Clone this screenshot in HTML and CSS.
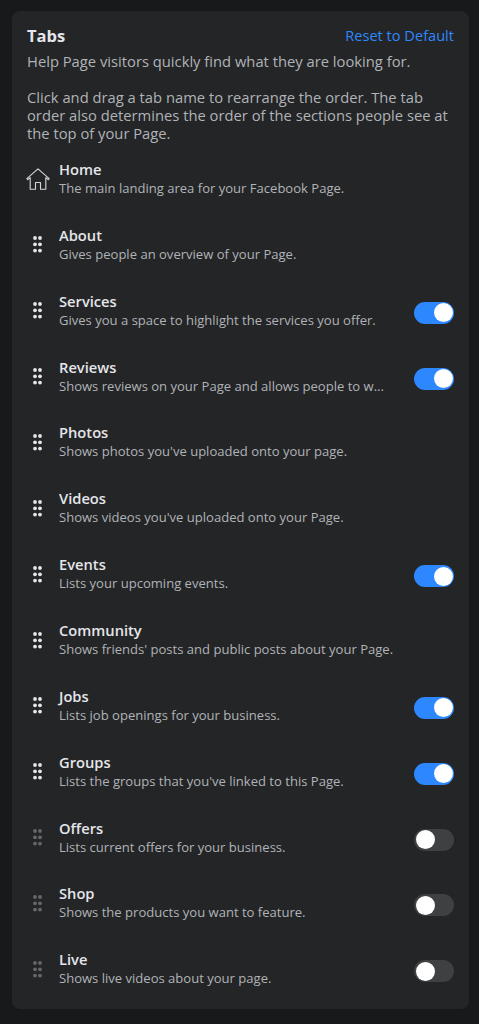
FILE: index.html
```html
<!DOCTYPE html>
<html lang="en">
<head>
<meta charset="UTF-8">
<meta name="viewport" content="width=device-width, initial-scale=1.0">
<title>Tabs</title>
<link rel="stylesheet" href="styles.css">
</head>
<body>
  <svg class="defs" width="0" height="0">
    <defs>
      <g id="grip">
        <circle cx="2" cy="2" r="1.900"/><circle cx="7" cy="2" r="1.900"/>
        <circle cx="2" cy="8.300" r="1.900"/><circle cx="7" cy="8.300" r="1.900"/>
        <circle cx="2" cy="14.600" r="1.900"/><circle cx="7" cy="14.600" r="1.900"/>
      </g>
    </defs>
  </svg>

  <div class="card">
    <div class="head">
      <h1>Tabs</h1>
      <a class="reset">Reset to Default</a>
    </div>
    <p class="intro">Help Page visitors quickly find what they are looking for.</p>
    <p class="intro second">Click and drag a tab name to rearrange the order. The tab order also determines the order of the sections people see at the top of your Page.</p>

    <div class="rows">
      <div class="row">
        <svg class="home" width="24" height="22" viewBox="0 0 24 22" fill="none" stroke="#d4d6da" stroke-width="1.100" stroke-linejoin="round"><path d="M.8 10.600 12 .8l11.200 9.800-1 1.100-2.400-2.100v11.600h-5.300v-6.700H9.500v6.700H4.200V9.600l-2.400 2.100z"/></svg>
        <div class="text"><div class="name">Home</div><div class="desc">The main landing area for your Facebook Page.</div></div>
      </div>
      <div class="row">
        <svg class="grip" width="9" height="17" viewBox="0 0 9 17"><use href="#grip"/></svg>
        <div class="text"><div class="name">About</div><div class="desc">Gives people an overview of your Page.</div></div>
      </div>
      <div class="row">
        <svg class="grip" width="9" height="17" viewBox="0 0 9 17"><use href="#grip"/></svg>
        <div class="text"><div class="name">Services</div><div class="desc">Gives you a space to highlight the services you offer.</div></div>
        <span class="toggle on"></span>
      </div>
      <div class="row">
        <svg class="grip" width="9" height="17" viewBox="0 0 9 17"><use href="#grip"/></svg>
        <div class="text"><div class="name">Reviews</div><div class="desc">Shows reviews on your Page and allows people to w...</div></div>
        <span class="toggle on"></span>
      </div>
      <div class="row">
        <svg class="grip" width="9" height="17" viewBox="0 0 9 17"><use href="#grip"/></svg>
        <div class="text"><div class="name">Photos</div><div class="desc">Shows photos you've uploaded onto your page.</div></div>
      </div>
      <div class="row">
        <svg class="grip" width="9" height="17" viewBox="0 0 9 17"><use href="#grip"/></svg>
        <div class="text"><div class="name">Videos</div><div class="desc">Shows videos you've uploaded onto your Page.</div></div>
      </div>
      <div class="row">
        <svg class="grip" width="9" height="17" viewBox="0 0 9 17"><use href="#grip"/></svg>
        <div class="text"><div class="name">Events</div><div class="desc">Lists your upcoming events.</div></div>
        <span class="toggle on"></span>
      </div>
      <div class="row">
        <svg class="grip" width="9" height="17" viewBox="0 0 9 17"><use href="#grip"/></svg>
        <div class="text"><div class="name">Community</div><div class="desc">Shows friends' posts and public posts about your Page.</div></div>
      </div>
      <div class="row">
        <svg class="grip" width="9" height="17" viewBox="0 0 9 17"><use href="#grip"/></svg>
        <div class="text"><div class="name">Jobs</div><div class="desc">Lists job openings for your business.</div></div>
        <span class="toggle on"></span>
      </div>
      <div class="row">
        <svg class="grip" width="9" height="17" viewBox="0 0 9 17"><use href="#grip"/></svg>
        <div class="text"><div class="name">Groups</div><div class="desc">Lists the groups that you've linked to this Page.</div></div>
        <span class="toggle on"></span>
      </div>
      <div class="row">
        <svg class="grip dim" width="9" height="17" viewBox="0 0 9 17"><use href="#grip"/></svg>
        <div class="text"><div class="name">Offers</div><div class="desc">Lists current offers for your business.</div></div>
        <span class="toggle"></span>
      </div>
      <div class="row">
        <svg class="grip dim" width="9" height="17" viewBox="0 0 9 17"><use href="#grip"/></svg>
        <div class="text"><div class="name">Shop</div><div class="desc">Shows the products you want to feature.</div></div>
        <span class="toggle"></span>
      </div>
      <div class="row">
        <svg class="grip dim" width="9" height="17" viewBox="0 0 9 17"><use href="#grip"/></svg>
        <div class="text"><div class="name">Live</div><div class="desc">Shows live videos about your page.</div></div>
        <span class="toggle"></span>
      </div>
    </div>
  </div>
</body>
</html>
```

FILE: styles.css
```css
body {
  margin: 0;
  height: 1024px;
  padding: 11px 10px 15px 12px;
  box-sizing: border-box;
  overflow: hidden;
  background-color: #18191a;
  font-family: "Open Sans", "Noto Sans", sans-serif;
}
.defs {
  position: absolute;
}
.card {
  height: 998px;
  box-sizing: border-box;
  padding: 14px 15px 0;
  background-color: #242526;
  border-radius: 8px;
}
.head {
  display: flex;
  justify-content: space-between;
  align-items: center;
  height: 20px;
}
h1 {
  margin: 0;
  font-size: 16.500px;
  font-weight: 700;
  color: #e4e6eb;
}
.reset {
  font-size: 14.600px;
  color: #2d88ff;
}
.intro {
  margin: 6.500px 0 0;
  font-size: 14.750px;
  line-height: 18.300px;
  color: #b0b3b8;
}
.second {
  margin-top: 18px;
}
.rows {
  margin-top: 10.500px;
}
.row {
  display: flex;
  align-items: center;
  height: 65.850px;
  padding-bottom: 16px;
  box-sizing: border-box;
}
.text {
  flex: 1;
  min-width: 0;
}
.grip {
  margin: 2px 17px 0 6px;
  fill: #e4e6eb;
}
.grip.dim {
  fill: #65676b;
}
.home {
  margin: 2px 9px 0 -1px;
}
.name {
  font-size: 14.700px;
  font-weight: 600;
  line-height: 18px;
  color: #e4e6eb;
}
.desc {
  font-size: 13.050px;
  line-height: 16px;
  margin-top: 2px;
  color: #b0b3b8;
  white-space: nowrap;
}
.toggle {
  position: relative;
  flex: none;
  width: 40px;
  height: 22px;
  margin-top: 6px;
  border-radius: 11px;
  background-color: #3e4042;
}
.toggle::after {
  content: "";
  position: absolute;
  top: 1.500px;
  left: 1.500px;
  width: 19px;
  height: 19px;
  border-radius: 50%;
  background-color: #fff;
}
.toggle.on {
  background-color: #2d88ff;
}
.toggle.on::after {
  left: 19.500px;
}
```
